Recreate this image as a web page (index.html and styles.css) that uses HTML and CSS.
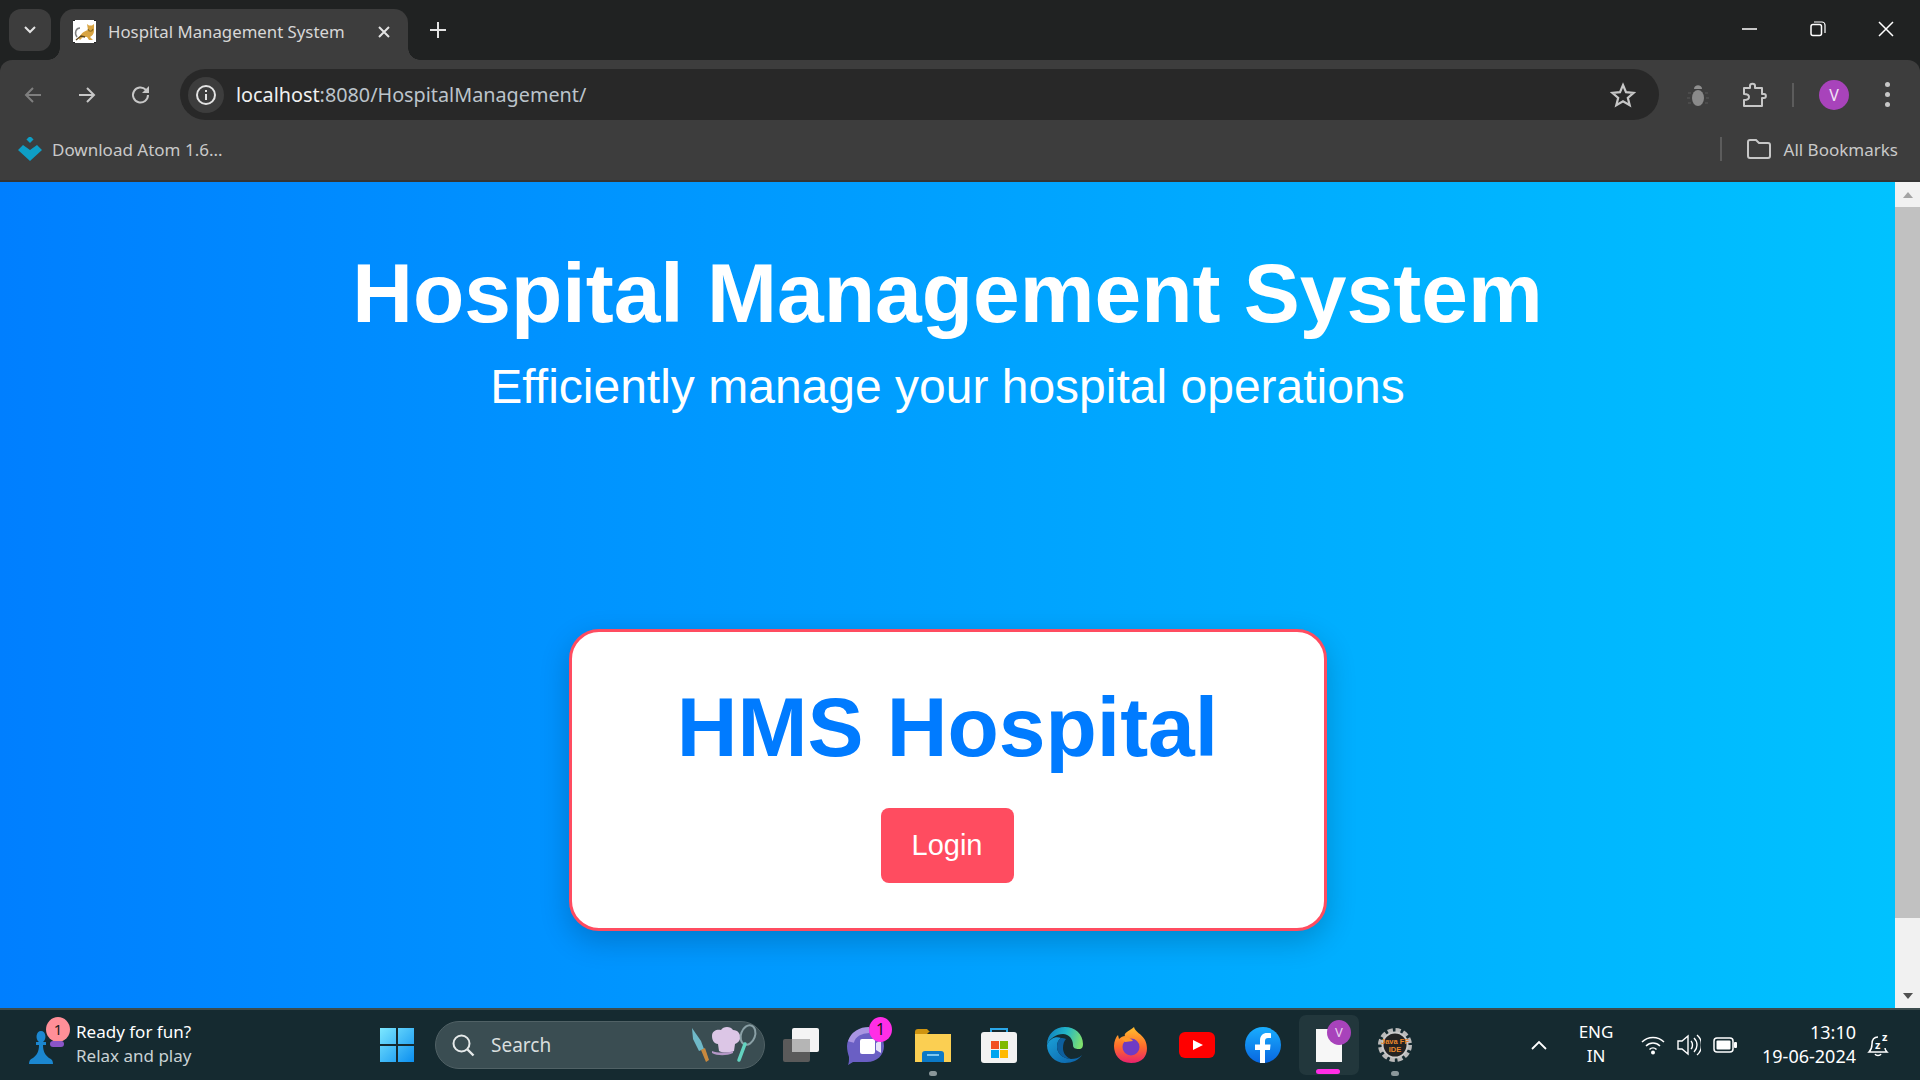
FILE: index.html
```html
<!DOCTYPE html>
<html lang="en">
<head>
<meta charset="utf-8">
<title>Hospital Management System</title>
<link rel="stylesheet" href="styles.css">
</head>
<body>
<div class="tabstrip">
  <div class="tabsearch"><svg width="14" height="10" viewBox="0 0 14 10"><path d="M2 2l5 5 5-5" fill="none" stroke="#e3e3e3" stroke-width="2"/></svg></div>
  <div class="tab">
    <svg class="favicon" width="23" height="23" viewBox="0 0 23 23"><rect width="23" height="23" fill="#fff"/><path d="M0 .5h2M21 .5h2M0 22.500h2M21 22.500h2" stroke="#222" stroke-width="1"/><path d="M6 19c1-5 5-8 9-9l-1-6 2 1.500h3L21 4l0 7c0 3-2 5-4 6l3 3-4 0-2-3-4 0-3 3z" fill="#d9a441"/><path d="M15 9c1 3 4 3 5 0" fill="none" stroke="#8a6a22" stroke-width="1.200"/><path d="M7 8C3 8 1 13 4 17" fill="none" stroke="#7f7f7f" stroke-width="1.500"/><path d="M3 20l5-4 4 1" fill="none" stroke="#5e4518" stroke-width="1.300"/></svg>
    <span class="tabtitle">Hospital Management System</span>
    <svg class="tabclose" width="12" height="12" viewBox="0 0 12 12"><path d="M1 1l10 10M11 1L1 11" stroke="#e3e3e3" stroke-width="2"/></svg>
  </div>
  <svg class="newtab" width="16" height="16" viewBox="0 0 16 16"><path d="M8 0v16M0 8h16" stroke="#e3e3e3" stroke-width="2"/></svg>
  <div class="winctl">
    <svg width="16" height="16" viewBox="0 0 16 16"><path d="M0 8h15" stroke="#fff" stroke-width="1.500"/></svg>
    <svg width="16" height="16" viewBox="0 0 16 16"><rect x="1" y="3.500" width="10.500" height="11" rx="2" fill="none" stroke="#fff" stroke-width="1.500"/><path d="M4 1h8c1.500 0 3 1.500 3 3v8" fill="none" stroke="#fff" stroke-width="1.200"/></svg>
    <svg width="16" height="16" viewBox="0 0 16 16"><path d="M1 1l14 14M15 1L1 15" stroke="#fff" stroke-width="1.500"/></svg>
  </div>
</div>
<div class="toolbar">
  <svg class="nav" width="24" height="24" viewBox="0 0 24 24"><path d="M20 12H5M12 5l-7 7 7 7" fill="none" stroke="#7f7f7f" stroke-width="2"/></svg>
  <svg class="nav" width="24" height="24" viewBox="0 0 24 24"><path d="M4 12h15M12 5l7 7-7 7" fill="none" stroke="#c7c7c7" stroke-width="2"/></svg>
  <svg class="nav" width="24" height="24" viewBox="0 0 24 24"><path d="M19 12a7.500 7.500 0 1 1-2.200-5.300L19 9" fill="none" stroke="#c7c7c7" stroke-width="2"/><path d="M20 3v7h-7z" fill="#c7c7c7"/></svg>
  <div class="omnibox">
    <div class="infochip"><svg width="22" height="22" viewBox="0 0 22 22"><circle cx="11" cy="11" r="9" fill="none" stroke="#e3e3e3" stroke-width="2"/><path d="M11 10v6M11 6v2" stroke="#e3e3e3" stroke-width="2"/></svg></div>
    <span class="url"><span class="urlhost">localhost</span>:8080/HospitalManagement/</span>
    <svg class="star" width="26" height="26" viewBox="0 0 26 26"><path d="M13 3l3 7.200 7.700.6-5.900 5 1.900 7.500L13 19.300l-6.700 4 1.900-7.500-5.900-5 7.700-.6z" fill="none" stroke="#c7c7c7" stroke-width="2.200"/></svg>
  </div>
  <svg class="bug" width="22" height="24" viewBox="0 0 22 24"><path d="M7 6c0-5 8-5 8 0z" fill="#8f8f8f"/><ellipse cx="11" cy="15" rx="6" ry="8" fill="#8a8a8a"/><path d="M1 10h3M18 10h3M0 15h3M19 15h3M1 20h3M18 20h3" stroke="#5b5b5b" stroke-width="1"/></svg>
  <svg class="puzzle" width="26" height="26" viewBox="0 0 26 26"><path d="M3 6h6V4c0-3 5-3 5 0v2h7v6h2c2.500 0 2.500 4 0 4h-2v8H3v-6c3 0 5-1 5-3s-2-3-5-3z" fill="none" stroke="#c7c7c7" stroke-width="2" stroke-linejoin="round"/></svg>
  <div class="vline"></div>
  <div class="avatar">V</div>
  <div class="dots"><i></i><i></i><i></i></div>
</div>
<div class="bookmarks">
  <svg width="24" height="24" viewBox="0 0 24 24"><rect x="9.500" y="0" width="5" height="5" transform="rotate(45 12 2.500)" fill="#0e9fc6"/><path d="M0 13l5-5 7 5 7-5 5 5-12 11z" fill="#0e9fc6"/></svg>
  <span class="bmtext">Download Atom 1.6...</span>
  <div class="vline bmline"></div>
  <svg class="folder" width="24" height="20" viewBox="0 0 24 20"><path d="M1 3c0-1 .5-2 2-2h6l3 3h9c1 0 2 1 2 2v11c0 1-1 2-2 2H3c-1 0-2-1-2-2z" fill="none" stroke="#c7c7c7" stroke-width="2"/></svg>
  <span class="bmall">All Bookmarks</span>
</div>
<div class="viewport">
  <main class="page">
    <h1 class="title">Hospital Management System</h1>
    <p class="subtitle">Efficiently manage your hospital operations</p>
    <section class="card">
      <h2 class="cardtitle">HMS Hospital</h2>
      <a class="login">Login</a>
    </section>
  </main>
  <div class="scrollbar">
    <div class="arrow up"></div>
    <div class="track"><div class="thumb"></div></div>
    <div class="arrow down"></div>
  </div>
</div>
<footer class="taskbar">
  <div class="widget">
    <div class="chess">
      <svg width="26" height="36" viewBox="0 0 26 36"><path d="M13 2c5 0 6 8 2 11h3v3h-3c0 6 2 10 6 13 3 1 4 3 4 6H1c0-3 1-5 4-6 4-3 6-7 6-13H8v-3h3C7 10 8 2 13 2z" fill="#1b87d0"/></svg>
      <span class="wbadge">1</span>
      <i class="wpurple"></i>
    </div>
    <div class="wtext"><span class="wline1">Ready for fun?</span><span class="wline2">Relax and play</span></div>
  </div>
  <div class="slot startslot">
    <svg width="36" height="36" viewBox="0 0 36 36"><defs><linearGradient id="win" x1="0" y1="0" x2="1" y2="1"><stop offset="0" stop-color="#7ce8ff"/><stop offset="1" stop-color="#0b8ff0"/></linearGradient></defs><path d="M1 1h16v16H1zM19 1h16v16H19zM1 19h16v16H1zM19 19h16v16H19z" fill="url(#win)"/></svg>
  </div>
  <div class="search">
    <svg width="26" height="26" viewBox="0 0 26 26"><circle cx="11.500" cy="11.500" r="8" fill="none" stroke="#e6eaea" stroke-width="2"/><path d="M17.500 17.500l6 6" stroke="#e6eaea" stroke-width="2.400"/></svg>
    <span class="searchtext">Search</span>
    <svg class="chef" width="68" height="46" viewBox="0 0 68 46"><path d="M2 6l9 13 3 8-5 2L3 17z" fill="#6fb9c8"/><path d="M11 28l4-2 4 12-3 2z" fill="#c9893e"/><path d="M22 14c0-6 6-7 9-6 2-4 10-4 12 0 5 0 8 4 7 9-1 3-3 4-5 5l-1 7c-5 2-11 2-15 0l-1-7c-4 0-6-4-6-8z" fill="#dcc6e6"/><path d="M22 29c5 2 15 2 21 0v2c-6 3-16 3-21 0z" fill="#b497c6"/><ellipse cx="58" cy="13" rx="7" ry="10" transform="rotate(20 58 13)" fill="none" stroke="#8aa0a6" stroke-width="2"/><path d="M55 22l-6 16" stroke="#63d3c0" stroke-width="3.500" stroke-linecap="round"/></svg>
  </div>
  <div class="apps">
    <div class="slot"><svg width="36" height="34" viewBox="0 0 36 34"><rect y="11" width="27" height="23" rx="2" fill="#5a5a5a"/><rect x="9" width="27" height="24" rx="2" fill="#f4f4f4"/><rect x="9" y="11" width="18" height="13" fill="#b5b5b5"/></svg></div>
    <div class="slot teams"><svg width="44" height="42" viewBox="0 0 44 42"><path d="M20 6c10 0 17 7 17 16s-7 16-17 16H6l-5 3c1-2 1-5 1-8-1-3-2-7-2-11C0 13 9 6 20 6z" fill="#6a5fc4"/><path d="M4 18C6 10 14 6 22 6" fill="none" stroke="#a995e2" stroke-width="6"/><rect x="13" y="15" width="15" height="15" rx="2" fill="#fff"/><path d="M29 19l5-3v13l-5-3z" fill="#e5e1f7"/></svg><span class="appbadge">1</span></div>
    <div class="slot"><svg width="36" height="33" viewBox="0 0 36 33"><path d="M0 3c0-2 1-3 3-3h9l3 3h-1L10 7H0z" fill="#cf9410"/><path d="M0 5h36v28H0z" fill="#fbcf52"/><path d="M7 33V25c0-2 1-3 3-3h16c2 0 3 1 3 3v8z" fill="#0b79c7"/><path d="M12 26h12" stroke="#7dc6ef" stroke-width="2"/></svg><i class="rundot"></i></div>
    <div class="slot"><svg width="36" height="36" viewBox="0 0 36 36"><path d="M10 8V2h16v6" fill="none" stroke="#2aa7e8" stroke-width="2"/><rect y="5" width="36" height="31" rx="3" fill="#f2f2f2"/><rect x="10" y="14" width="8" height="8" fill="#f25022"/><rect x="19" y="14" width="8" height="8" fill="#7fba00"/><rect x="10" y="23" width="8" height="8" fill="#00a4ef"/><rect x="19" y="23" width="8" height="8" fill="#ffb900"/></svg></div>
    <div class="slot"><svg width="36" height="36" viewBox="0 0 36 36"><defs><linearGradient id="edge" x1="0" y1=".3" x2="1" y2=".5"><stop offset="0" stop-color="#0f7fc0"/><stop offset=".5" stop-color="#22b5c8"/><stop offset="1" stop-color="#7fe06e"/></linearGradient><linearGradient id="edge2" x1="0" y1="0" x2="1" y2="1"><stop offset="0" stop-color="#1aa0d8"/><stop offset="1" stop-color="#0b5ea6"/></linearGradient></defs><path d="M0 18C0 7 8 0 18 0c10 0 18 7 18 17 0 3-1 5-4 5-4 0-6-1-6-4 0-6-4-11-10-11C9 7 3 11 0 18z" fill="url(#edge)"/><path d="M0 18C3 11 9 9 14 11c-3 2-4 5-4 9 0 7 7 12 14 12 4 0 8-1 11-4-3 5-10 8-17 8C8 36 0 28 0 18z" fill="url(#edge2)"/><path d="M14 11c-3 2-4 5-4 9 0 7 7 12 14 12-5-2-8-6-8-11 0-4 1-7 3-9-2-1-3-1-5-1z" fill="#0d5f9e"/></svg></div>
    <div class="slot"><svg width="34" height="36" viewBox="0 0 34 36"><defs><linearGradient id="fox" x1="0" y1="0" x2="0" y2="1"><stop offset="0" stop-color="#ffc02e"/><stop offset=".55" stop-color="#ff6a2b"/><stop offset="1" stop-color="#e9226e"/></linearGradient></defs><path d="M20 0c1 5 8 7 11 13 4 8 3 23-14 23C5 36 0 27 0 19c0-5 2-9 4-11l1 4c2-2 4-3 6-3-2-3 6-6 9-9z" fill="url(#fox)"/><circle cx="17" cy="20" r="8.500" fill="#6f3bc4"/><path d="M7 11c5-2 10 0 12 3l-8 1z" fill="#ff9a2b"/></svg></div>
    <div class="slot"><svg width="36" height="26" viewBox="0 0 36 26"><rect width="36" height="26" rx="6" fill="#f00"/><path d="M14 8l10 5-10 5z" fill="#fff"/></svg></div>
    <div class="slot"><svg width="36" height="36" viewBox="0 0 36 36"><defs><linearGradient id="fb" x1="0" y1="0" x2="0" y2="1"><stop offset="0" stop-color="#19aeff"/><stop offset="1" stop-color="#0866e0"/></linearGradient></defs><circle cx="18" cy="18" r="18" fill="url(#fb)"/><path d="M15 36V23h-5v-5.500h5v-4C15 8.500 18 6 22 6c2 0 3.500.2 4 .3v4.700h-3c-2 0-3 1-3 3v3.500h5.500L25 23h-5v13z" fill="#fff"/></svg></div>
    <div class="slot active"><div class="doc"></div><span class="docv">V</span><i class="underline"></i></div>
    <div class="slot"><svg width="34" height="34" viewBox="0 0 34 34"><circle cx="17" cy="17" r="14.500" fill="none" stroke="#b9b9b9" stroke-width="5" stroke-dasharray="5 2.600"/><circle cx="17" cy="17" r="12.500" fill="#222" stroke="#c9c9c9" stroke-width="2"/><text x="17" y="15.500" class="gear" text-anchor="middle">Java FF</text><text x="17" y="24" class="gear" text-anchor="middle">IDE</text></svg><i class="rundot"></i></div>
  </div>
  <div class="tray">
    <svg class="caret" width="16" height="10" viewBox="0 0 16 10"><path d="M1 9l7-7 7 7" fill="none" stroke="#fff" stroke-width="1.800"/></svg>
    <div class="lang"><span>ENG</span><span>IN</span></div>
    <svg class="wifi" width="24" height="20" viewBox="0 0 24 20"><path d="M1 7c6-6 16-6 22 0M5 11c4-4 10-4 14 0M8.500 14.500c2-2 5-2 7 0" fill="none" stroke="#fff" stroke-width="1.500"/><circle cx="12" cy="17.500" r="2" fill="#fff"/></svg>
    <svg class="vol" width="24" height="22" viewBox="0 0 24 22"><path d="M1 7h4l6-5v18l-6-5H1z" fill="none" stroke="#fff" stroke-width="1.400"/><path d="M14 7c2 2 2 6 0 8M17 4c4 4 4 10 0 14M20 1c6 5 6 15 0 20" fill="none" stroke="#fff" stroke-width="1.400"/></svg>
    <svg class="batt" width="24" height="16" viewBox="0 0 24 16"><rect x="1" y="1" width="19" height="14" rx="3" fill="none" stroke="#fff" stroke-width="1.500"/><rect x="3.500" y="3.500" width="14" height="9" rx="1" fill="#fff"/><rect x="21" y="5" width="3" height="6" rx="1" fill="#fff"/></svg>
    <div class="clock"><span>13:10</span><span>19-06-2024</span></div>
    <svg class="bell" width="24" height="36" viewBox="0 0 24 36"><path d="M11 10c-4 0-6 3-6 7 0 4-1 6-3 8h18c-1-1-2-2-2-4M8 27c1 2 5 2 6 0" fill="none" stroke="#fff" stroke-width="1.500"/><text x="8" y="22" class="zz">z</text><text x="15" y="14" class="zz">z</text></svg>
  </div>
</footer>
</body>
</html>
```

FILE: styles.css
```css
* { box-sizing: border-box; }
html, body { margin: 0; height: 100%; }
body {
  width: 1920px; height: 1080px; overflow: hidden;
  display: flex; flex-direction: column;
  font-family: "Noto Sans", "Open Sans", sans-serif;
  background: #202222;
}
svg { display: block; flex: none; }

/* tab strip */
.tabstrip { height: 60px; flex: none; display: flex; align-items: flex-end; background: #202222; padding-left: 9px; position: relative; }
.tabsearch { width: 42px; height: 42px; margin-bottom: 9px; border-radius: 12px; background: #3d3d3d; display: flex; align-items: center; justify-content: center; }
.tab { width: 348px; height: 51px; margin-left: 9px; background: #3d3d3d; border-radius: 14px 14px 0 0; display: flex; align-items: center; padding: 0 0 6px 13px; position: relative; }
.tab::before, .tab::after { content: ""; position: absolute; bottom: 0; width: 12px; height: 12px; background: radial-gradient(circle at 0 0, #202222 11.500px, #3d3d3d 12px); }
.tab::before { left: -12px; }
.tab::after { right: -12px; background: radial-gradient(circle at 100% 0, #202222 11.500px, #3d3d3d 12px); }
.favicon { margin-right: 12px; }
.tabtitle { font-size: 16.800px; color: #d7d7d7; white-space: nowrap; width: 270px; }
.tabclose { margin-left: 0; }
.newtab { margin: 0 0 22px 22px; }
.winctl { margin-left: auto; align-self: stretch; display: flex; align-items: center; gap: 52px; padding: 0 14px 2px 0; margin-right: 12px; }

/* toolbar */
.toolbar { height: 60px; flex: none; background: #3d3d3d; border-radius: 12px 12px 0 0; display: flex; align-items: center; padding: 9px 0 0 21px; }
.nav { margin-right: 31px; }
.nav:nth-child(2) { margin-right: 31px; margin-left: -1px; }
.nav:nth-child(3) { margin-right: 27px; margin-left: -1px; }
.omnibox { width: 1479px; height: 51px; border-radius: 26px; background: #282828; display: flex; align-items: center; padding-left: 8px; }
.infochip { width: 36px; height: 36px; border-radius: 18px; background: #3d3d3d; display: flex; align-items: center; justify-content: center; }
.url { margin-left: 12px; font-size: 19.800px; color: #bcc4cb; white-space: nowrap; }
.urlhost { color: #f0f0f0; }
.star { margin-left: auto; margin-right: 23px; }
.bug { margin-left: 28px; }
.puzzle { margin-left: 32px; }
.vline { width: 2px; height: 24px; background: #5c5c5c; }
.toolbar .vline { margin-left: 25px; }
.avatar { margin-left: 25px; width: 30px; height: 30px; border-radius: 50%; background: #a843bb; color: #f3e3f6; font-size: 16px; display: flex; align-items: center; justify-content: center; }
.dots { margin-left: 36px; display: flex; flex-direction: column; gap: 5px; }
.dots i { width: 5px; height: 5px; border-radius: 50%; background: #c7c7c7; display: block; }

/* bookmarks */
.bookmarks { height: 62px; flex: none; background: #3d3d3d; border-bottom: 2px solid #343434; display: flex; align-items: center; padding: 0 22px 2px 18px; }
.bmtext { margin-left: 10px; font-size: 17px; color: #c9c9c9; white-space: nowrap; }
.bmline { margin-left: auto; }
.folder { margin-left: 25px; }
.bmall { margin-left: 13px; font-size: 17px; color: #c9c9c9; white-space: nowrap; }

/* page */
.viewport { flex: 1; display: flex; min-height: 0; }
.page { flex: 1; min-width: 0; background: linear-gradient(to right, #007fff, #00c2ff); display: flex; flex-direction: column; align-items: center; font-family: "Liberation Sans", Arial, sans-serif; color: #fff; }
.title { margin: 63px 0 0; font-size: 84px; line-height: 96px; font-weight: 700; }
.subtitle { margin: 17px 0 0; font-size: 48px; line-height: 58px; }
.card { margin-top: 213px; width: 758px; height: 302px; background: #fff; border: 3px solid #ff4c60; border-radius: 30px; box-shadow: 0 10px 30px rgba(0,0,0,.2); display: flex; flex-direction: column; align-items: center; padding-top: 47px; }
.cardtitle { margin: 0; font-size: 84px; line-height: 96px; font-weight: 700; color: #007bff; }
.login { margin: 33px 1px 0 0; width: 133px; height: 75px; border-radius: 8px; background: #ff4c60; color: #fff; font-size: 29px; display: flex; align-items: center; justify-content: center; }

/* scrollbar */
.scrollbar { width: 25px; flex: none; background: #f1f1f1; display: flex; flex-direction: column; }
.arrow { height: 25px; flex: none; display: flex; align-items: center; justify-content: center; }
.arrow::before { content: ""; border-left: 5.500px solid transparent; border-right: 5.500px solid transparent; }
.up::before { border-bottom: 6px solid #a3a3a3; }
.down::before { border-top: 6px solid #505050; }
.track { flex: 1; padding-bottom: 65px; display: flex; }
.thumb { flex: 1; background: #c1c1c1; }

/* taskbar */
.taskbar { height: 72px; flex: none; background: #152a30; border-top: 2px solid #3c4c4e; display: flex; align-items: center; color: #fff; font-family: "Noto Sans", sans-serif; }
.widget { width: 364px; padding-left: 28px; display: flex; align-items: center; }
.chess { position: relative; width: 26px; height: 36px; margin-top: 4px; }
.wbadge { position: absolute; left: 18px; top: -12px; width: 24px; height: 25px; border-radius: 50%; background: #ff8f98; color: #222; font-size: 15px; line-height: 25px; text-align: center; }
.wpurple { position: absolute; left: 22px; top: 12px; width: 14px; height: 6px; border-radius: 3px; background: #8a55c8; }
.wtext { margin: -2px 0 0 22px; display: flex; flex-direction: column; font-size: 17px; line-height: 24px; }
.wline1 { color: #fff; }
.wline2 { color: #c9d2d4; }
.slot { width: 66px; height: 60px; flex: none; display: flex; align-items: center; justify-content: center; position: relative; }
.teams svg { margin-left: 4px; }
.search { width: 330px; height: 48px; margin-left: 5px; border-radius: 24px; background: #3a4d52; border: 1px solid #506165; display: flex; align-items: center; padding: 0 6px 0 14px; }
.searchtext { margin-left: 15px; font-size: 19px; color: #d8dede; }
.chef { margin-left: auto; }
.apps { display: flex; margin-left: 3px; }
.appbadge { position: absolute; right: 8px; top: 2px; width: 23px; height: 25px; border-radius: 50%; background: #ff2ee6; color: #111; font-size: 16px; line-height: 25px; text-align: center; }
.rundot { position: absolute; bottom: -1px; left: 29px; width: 8px; height: 5px; border-radius: 3px; background: #8a979a; }
.active::before { content: ""; position: absolute; inset: 0 3px; border-radius: 7px; background: #22373c; }
.doc { width: 26px; height: 33px; background: #f7f7f7; position: relative; }
.docv { position: absolute; left: 31px; top: 5px; width: 24px; height: 25px; border-radius: 50%; background: #a843bb; color: #e8d3ee; font-size: 13px; line-height: 25px; text-align: center; }
.underline { position: absolute; left: 20px; bottom: 1px; width: 24px; height: 5px; border-radius: 3px; background: #ff2ee6; }
.gear { font: 700 7.500px "Liberation Sans", sans-serif; fill: #e8872b; }
.zz { font: 700 11px "Noto Sans", sans-serif; fill: #fff; }
.tray { display: flex; align-items: center; flex: 1; min-width: 0; font-size: 17px; line-height: 24px; }
.caret { margin-left: 103px; }
.lang { margin: -2px 0 0 29px; width: 40px; display: flex; flex-direction: column; align-items: center; }
.wifi { margin-left: 25px; }
.vol { margin-left: 12px; }
.batt { margin-left: 12px; }
.clock { margin: -2px 0 0 19px; width: 100px; font-size: 18px; display: flex; flex-direction: column; align-items: flex-end; }
.bell { margin-left: 11px; }
```
